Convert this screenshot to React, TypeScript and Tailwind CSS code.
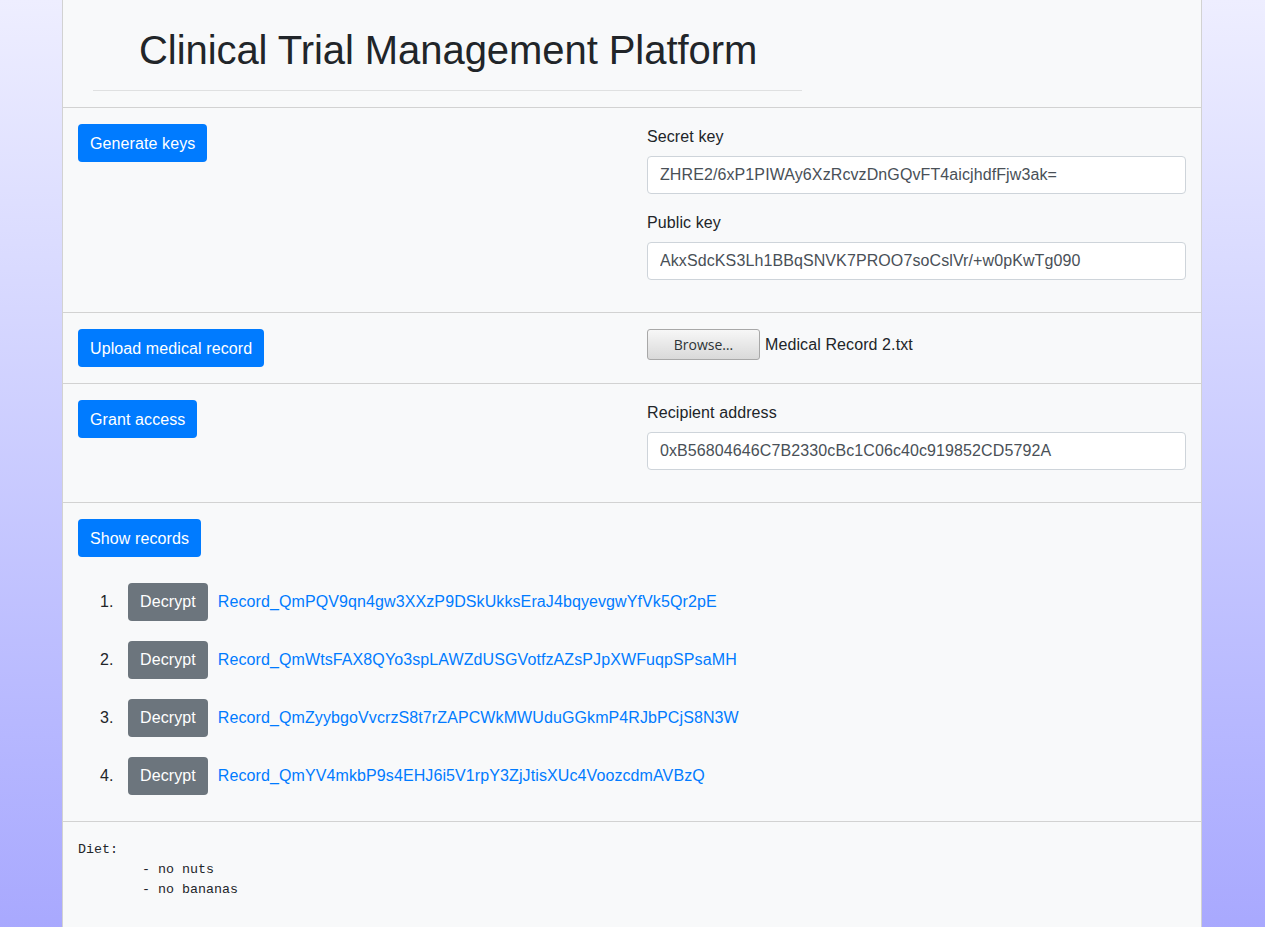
const records = [
  "Record_QmPQV9qn4gw3XXzP9DSkUkksEraJ4bqyevgwYfVk5Qr2pE",
  "Record_QmWtsFAX8QYo3spLAWZdUSGVotfzAZsPJpXWFuqpSPsaMH",
  "Record_QmZyybgoVvcrzS8t7rZAPCWkMWUduGGkmP4RJbPCjS8N3W",
  "Record_QmYV4mkbP9s4EHJ6i5V1rpY3ZjJtisXUc4VoozcdmAVBzQ",
];

function PrimaryButton({ children }: { children: React.ReactNode }) {
  return (
    <button className="h-[38px] rounded-[4px] bg-[#007bff] px-3 pt-px text-base leading-6 text-white">
      {children}
    </button>
  );
}

function Field({ label, value }: { label: string; value: string }) {
  return (
    <div className="mb-4">
      <label className="mb-2 block pt-px text-base leading-[23px] text-[#212529]">{label}</label>
      <input
        readOnly
        value={value}
        className="block h-[38px] w-full rounded-[4px] border border-[#ced4da] bg-white px-3 text-base tracking-[0.1px] text-[#495057] outline-none"
      />
    </div>
  );
}

export default function App() {
  return (
    <div
      className="flex min-h-screen justify-center bg-gradient-to-b from-[#eeeeff] to-[#a8a8fe] pr-px tracking-[0.1px] text-[#212529]"
      style={{ fontFamily: '"Liberation Sans", Arial, sans-serif' }}
    >
      <div className="min-h-screen w-[1140px] border-x border-[#d2d2d2] bg-[#f8f9fa]">
        {/* Header */}
        <header className="border-b border-[#d2d2d2] pb-4">
          <div className="ml-[30px] w-[709px]">
            <h1 className="mb-[16px] pt-[26px] pl-[46px] text-[40px] leading-[48px] font-normal tracking-[-0.06px]">
              Clinical Trial Management Platform
            </h1>
            <hr className="border-t border-[#dfe0e1]" />
          </div>
        </header>

        {/* Keys */}
        <section className="grid grid-cols-2 border-b border-[#d2d2d2] pt-4 pb-4">
          <div className="px-[15px]">
            <PrimaryButton>Generate keys</PrimaryButton>
          </div>
          <div className="px-[15px]">
            <Field label="Secret key" value="ZHRE2/6xP1PIWAy6XzRcvzDnGQvFT4aicjhdfFjw3ak=" />
            <Field label="Public key" value="AkxSdcKS3Lh1BBqSNVK7PROO7soCslVr/+w0pKwTg090" />
          </div>
        </section>

        {/* Upload */}
        <section className="grid grid-cols-2 border-b border-[#d2d2d2] py-4">
          <div className="px-[15px]">
            <PrimaryButton>Upload medical record</PrimaryButton>
          </div>
          <div className="flex items-start px-[15px]">
            <div className="flex h-[31px] items-center">
              <span
                className="flex h-[31px] w-[113px] items-center justify-center rounded-[3px] border border-[#a8a8a8] bg-gradient-to-b from-[#f7f7f7] to-[#d9d9d9] text-[14px] tracking-normal text-[#2e3436]"
                style={{ fontFamily: '"Open Sans", sans-serif' }}
              >
                Browse…
              </span>
              <span className="ml-[5px] text-base">Medical Record 2.txt</span>
            </div>
          </div>
        </section>

        {/* Grant access */}
        <section className="grid grid-cols-2 border-b border-[#d2d2d2] pt-4 pb-4">
          <div className="px-[15px]">
            <PrimaryButton>Grant access</PrimaryButton>
          </div>
          <div className="px-[15px]">
            <Field label="Recipient address" value="0xB56804646C7B2330cBc1C06c40c919852CD5792A" />
          </div>
        </section>

        {/* Records */}
        <section className="border-b border-[#d2d2d2] px-[15px] pt-4 pb-4">
          <PrimaryButton>Show records</PrimaryButton>
          <ol className="mt-4 list-decimal pl-10">
            {records.map((r) => (
              <li key={r} className="py-[10px] text-base leading-6">
                <button className="ml-[10px] h-[38px] rounded-[4px] bg-[#6c757d] px-3 text-white">
                  Decrypt
                </button>
                <a href="#" className="ml-[10px] text-[#007bff]">
                  {r}
                </a>
              </li>
            ))}
          </ol>
        </section>

        {/* Decrypted content */}
        <section className="px-[15px] pt-[18px] pb-4">
          <pre
            className="mb-4 text-[13.33px] leading-5 tracking-normal text-[#212529] [tab-size:8]"
            style={{ fontFamily: '"Liberation Mono", "Courier New", monospace' }}
          >
            {"Diet:\n\t- no nuts\n\t- no bananas"}
          </pre>
        </section>
      </div>
    </div>
  );
}
